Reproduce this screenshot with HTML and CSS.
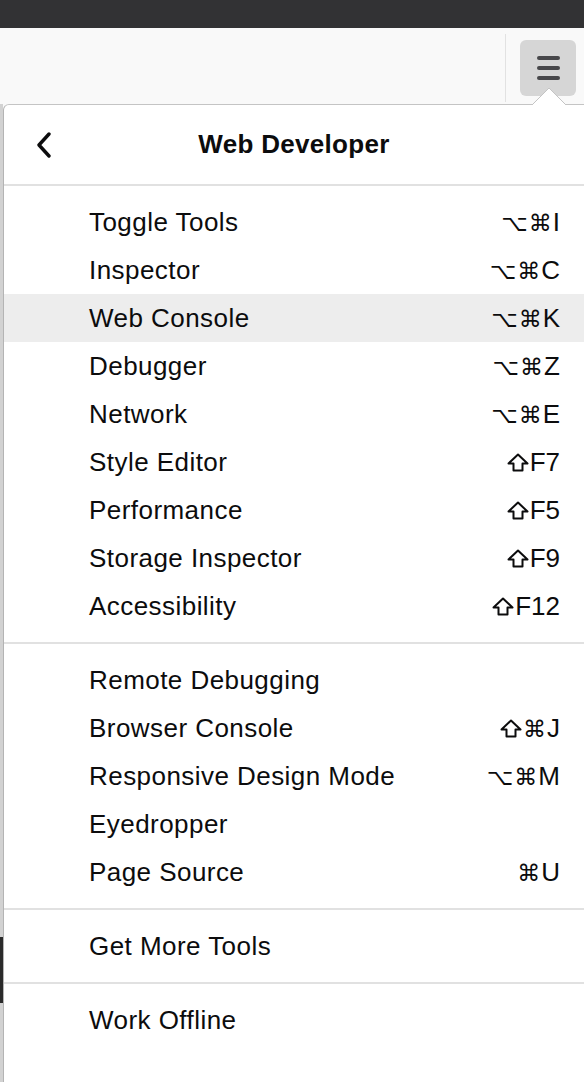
FILE: index.html
```html
<!DOCTYPE html>
<html lang="en">
<head>
<meta charset="utf-8">
<title>Web Developer menu</title>
<link rel="stylesheet" href="styles.css">
</head>
<body>
<div class="topbar"></div>
<div class="toolbar">
  <div class="tb-sep"></div>
  <div class="menu-btn">
    <span class="bar"></span><span class="bar"></span><span class="bar"></span>
  </div>
</div>
<div class="main">
  <div class="strip"><div class="strip-block"></div></div>
  <div class="panel">
    <svg class="arrow" width="34" height="18" viewBox="0 0 34 18"><path d="M0 18 L17 1 L34 18" fill="#ffffff" stroke="#c4c4c4" stroke-width="1"/></svg>
    <div class="header">
      <div class="back">
        <svg width="16" height="26" viewBox="0 0 16 26"><path d="M13 2 L3 13 L13 24" fill="none" stroke="#0c0c0d" stroke-width="3.4" stroke-linecap="round" stroke-linejoin="round"/></svg>
      </div>
      <div class="title">Web Developer</div>
      <div></div>
    </div>
    <div class="sep"></div>
    <div class="group">
      <div class="item"><span>Toggle Tools</span><span class="key"><span class="sym">⌥⌘</span>I</span></div>
      <div class="item"><span>Inspector</span><span class="key"><span class="sym">⌥⌘</span>C</span></div>
      <div class="item hover"><span>Web Console</span><span class="key"><span class="sym">⌥⌘</span>K</span></div>
      <div class="item"><span>Debugger</span><span class="key"><span class="sym">⌥⌘</span>Z</span></div>
      <div class="item"><span>Network</span><span class="key"><span class="sym">⌥⌘</span>E</span></div>
      <div class="item"><span>Style Editor</span><span class="key"><svg class="shift" width="22" height="19" viewBox="0 0 22 19"><path d="M11 1.5 L20.5 10.5 L15.5 10.5 L15.5 17.5 L6.5 17.5 L6.5 10.5 L1.5 10.5 Z" fill="none" stroke="#0c0c0d" stroke-width="2" stroke-linejoin="round"/></svg>F7</span></div>
      <div class="item"><span>Performance</span><span class="key"><svg class="shift" width="22" height="19" viewBox="0 0 22 19"><path d="M11 1.5 L20.5 10.5 L15.5 10.5 L15.5 17.5 L6.5 17.5 L6.5 10.5 L1.5 10.5 Z" fill="none" stroke="#0c0c0d" stroke-width="2" stroke-linejoin="round"/></svg>F5</span></div>
      <div class="item"><span>Storage Inspector</span><span class="key"><svg class="shift" width="22" height="19" viewBox="0 0 22 19"><path d="M11 1.5 L20.5 10.5 L15.5 10.5 L15.5 17.5 L6.5 17.5 L6.5 10.5 L1.5 10.5 Z" fill="none" stroke="#0c0c0d" stroke-width="2" stroke-linejoin="round"/></svg>F9</span></div>
      <div class="item"><span>Accessibility</span><span class="key"><svg class="shift" width="22" height="19" viewBox="0 0 22 19"><path d="M11 1.5 L20.5 10.5 L15.5 10.5 L15.5 17.5 L6.5 17.5 L6.5 10.5 L1.5 10.5 Z" fill="none" stroke="#0c0c0d" stroke-width="2" stroke-linejoin="round"/></svg>F12</span></div>
    </div>
    <div class="sep"></div>
    <div class="group">
      <div class="item"><span>Remote Debugging</span></div>
      <div class="item"><span>Browser Console</span><span class="key"><svg class="shift" width="22" height="19" viewBox="0 0 22 19"><path d="M11 1.5 L20.5 10.5 L15.5 10.5 L15.5 17.5 L6.5 17.5 L6.5 10.5 L1.5 10.5 Z" fill="none" stroke="#0c0c0d" stroke-width="2" stroke-linejoin="round"/></svg><span class="sym">⌘</span>J</span></div>
      <div class="item"><span>Responsive Design Mode</span><span class="key"><span class="sym">⌥⌘</span>M</span></div>
      <div class="item"><span>Eyedropper</span></div>
      <div class="item"><span>Page Source</span><span class="key"><span class="sym">⌘</span>U</span></div>
    </div>
    <div class="sep"></div>
    <div class="group">
      <div class="item"><span>Get More Tools</span></div>
    </div>
    <div class="sep"></div>
    <div class="group">
      <div class="item"><span>Work Offline</span></div>
    </div>
  </div>
</div>
</body>
</html>
```
FILE: styles.css
```css
html, body {
  margin: 0;
  padding: 0;
}
body {
  width: 584px;
  height: 1082px;
  overflow: hidden;
  font-family: "Liberation Sans", "DejaVu Sans", Arial, sans-serif;
  color: #0c0c0d;
  background: #f9f9f9;
}
.topbar {
  height: 28px;
  background: #323234;
}
.toolbar {
  height: 76px;
  background: #f9f9f9;
  display: flex;
  justify-content: flex-end;
  align-items: flex-start;
  box-sizing: border-box;
}
.tb-sep {
  width: 1px;
  height: 68px;
  margin-top: 6px;
  background: #e2e2e2;
}
.menu-btn {
  width: 56px;
  height: 56px;
  margin-top: 12px;
  margin-left: 14px;
  margin-right: 8px;
  border-radius: 6px;
  background: #d6d6d6;
  display: flex;
  flex-direction: column;
  align-items: center;
  justify-content: center;
  gap: 6px;
}
.bar {
  display: block;
  width: 23px;
  height: 4px;
  border-radius: 2px;
  background: #48484b;
}
.main {
  display: flex;
  height: 978px;
}
.strip {
  width: 3px;
  background: #d2d2d2;
  padding-top: 833px;
  box-sizing: border-box;
}
.strip-block {
  height: 66px;
  background: #2a2a2a;
}
.panel {
  position: relative;
  flex: 1;
  background: #ffffff;
  border-left: 1px solid #b4b4b4;
  border-top: 1px solid #c4c4c4;
  border-top-left-radius: 6px;
  box-sizing: border-box;
}
.arrow {
  position: absolute;
  top: -18px;
  right: 18px;
}
.header {
  height: 79px;
  display: grid;
  grid-template-columns: 1fr auto 1fr;
  align-items: center;
}
.back {
  padding-left: 32px;
  display: flex;
  align-items: center;
}
.back svg { display: block; }
.title {
  font-size: 26px;
  font-weight: bold;
  letter-spacing: 0.3px;
}
.sep {
  height: 2px;
  background: #e1e1e1;
}
.group {
  padding: 12px 0;
}
.item {
  height: 48px;
  display: flex;
  align-items: center;
  justify-content: space-between;
  padding-left: 85px;
  padding-right: 24px;
  font-size: 26px;
  letter-spacing: 0.45px;
}
.item.hover {
  background: #ededed;
}
.key {
  font-size: 26px;
  letter-spacing: 0;
}
.sym {
  font-family: "DejaVu Sans", sans-serif;
  font-size: 23px;
  letter-spacing: 1px;
}
.shift {
  vertical-align: -1px;
  margin-right: 1px;
}
```
